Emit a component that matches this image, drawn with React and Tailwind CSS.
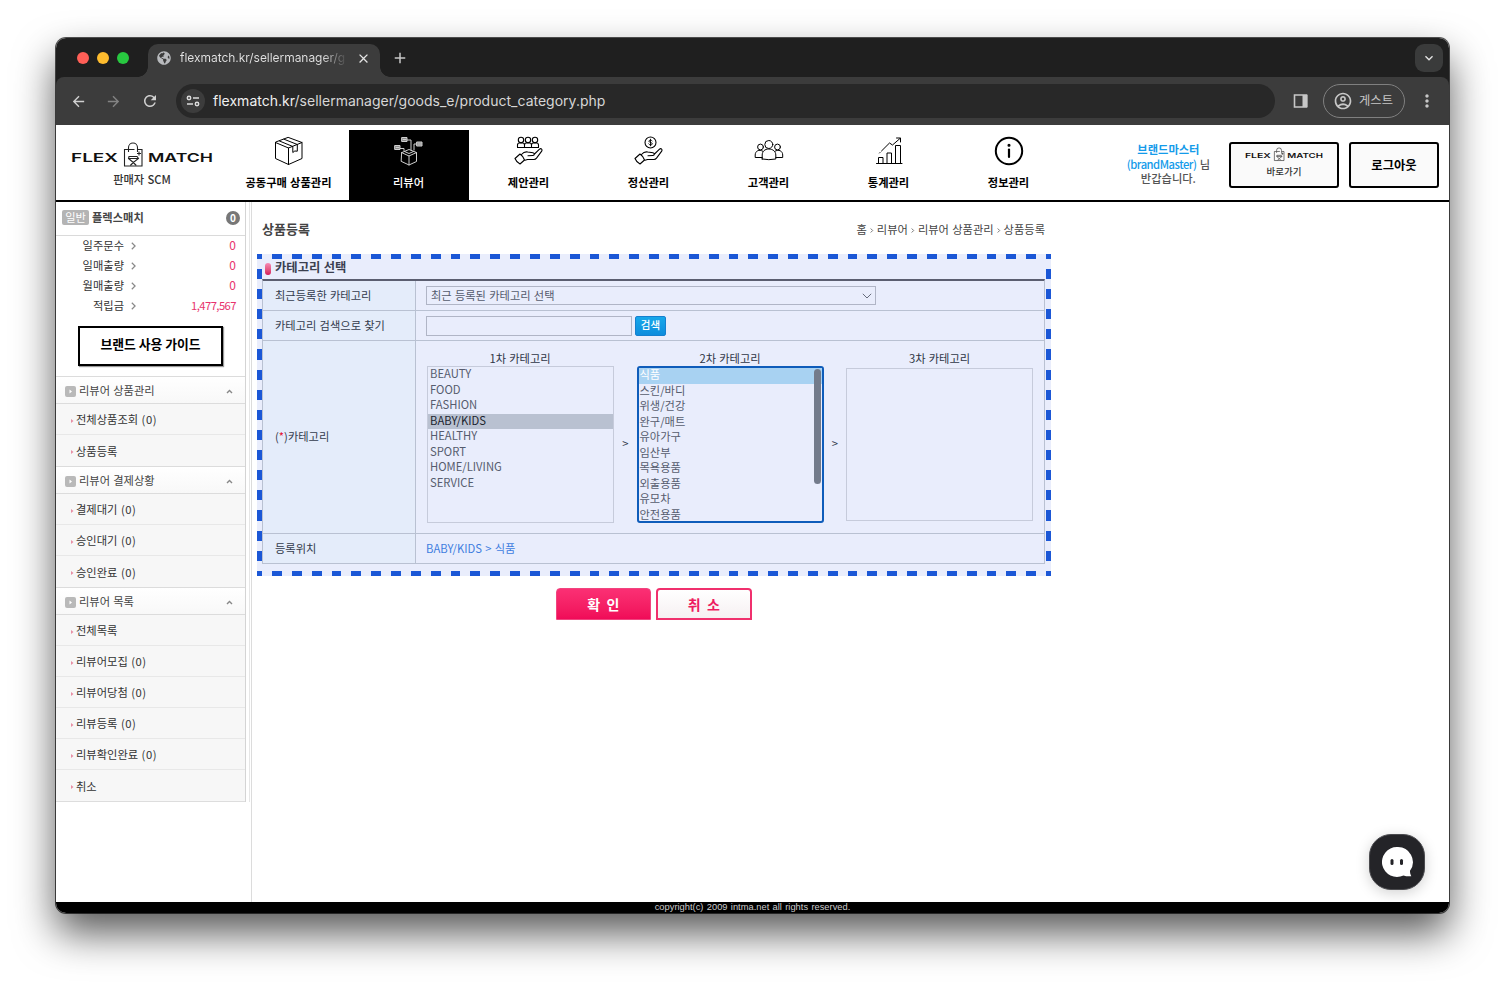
import React, { useState } from "react";
import { FaGlobeAmericas } from "react-icons/fa";
import {
  MdAdd,
  MdArrowBack,
  MdArrowForward,
  MdClose,
  MdKeyboardArrowDown,
  MdMoreVert,
  MdOutlineAccountCircle,
  MdRefresh,
} from "react-icons/md";

const menus = [
  { name: "공동구매 상품관리", icon: "box" },
  { name: "리뷰어", icon: "reviewer", active: true },
  { name: "제안관리", icon: "proposal" },
  { name: "정산관리", icon: "money" },
  { name: "고객관리", icon: "customer" },
  { name: "통계관리", icon: "chart" },
  { name: "정보관리", icon: "info" },
];

const stats = [
  { label: "일주문수", value: "0" },
  { label: "일매출량", value: "0" },
  { label: "월매출량", value: "0" },
  { label: "적립금", value: "1,477,567" },
];

const sections = [
  {
    title: "리뷰어 상품관리",
    items: [{ name: "전체상품조회", count: 0 }, { name: "상품등록" }],
  },
  {
    title: "리뷰어 결제상황",
    items: [
      { name: "결제대기", count: 0 },
      { name: "승인대기", count: 0 },
      { name: "승인완료", count: 0 },
    ],
  },
  {
    title: "리뷰어 목록",
    items: [
      { name: "전체목록" },
      { name: "리뷰어모집", count: 0 },
      { name: "리뷰어당첨", count: 0 },
      { name: "리뷰등록", count: 0 },
      { name: "리뷰확인완료", count: 0 },
      { name: "취소" },
    ],
  },
];

const firstCategories = [
  "BEAUTY",
  "FOOD",
  "FASHION",
  "BABY/KIDS",
  "HEALTHY",
  "SPORT",
  "HOME/LIVING",
  "SERVICE",
];

const secondCategories = [
  "식품",
  "스킨/바디",
  "위생/건강",
  "완구/매트",
  "유아가구",
  "임산부",
  "목욕용품",
  "외출용품",
  "유모차",
  "안전용품",
];

const Hand = () => (
  <>
    <path d="M1 22.5l5-4.500c2.200 1.500 3.800 3.500 4.500 6l-4.500 4c-2.500-1.200-4-3-5-5.500z" />
    <path d="M7.500 18.500c1.800-2.200 4-3 6.300-2.500l5.200.8c1.700.4 1.600 2.600 0 2.700l-5 .3M20 18.500l5.500-5.300c1.600-1.300 3.300.3 2.200 2l-5.200 7c-.7.900-1.500 1.300-2.500 1.300h-6.500l-2.500.8" />
  </>
);

const MenuIcon = ({ type }) => (
  <svg
    width="30"
    height="30"
    viewBox="0 0 30 30"
    fill="none"
    stroke="currentColor"
    strokeWidth="1.1"
    strokeLinejoin="round"
    strokeLinecap="round"
  >
    {type === "box" && (
      <g strokeWidth="1">
        <path d="M14.500 1.500l13.500 5v16l-13.500 6-13-6v-16z" />
        <path d="M1.500 6.500l13 5.500 13.500-5.500M14.500 12v16.500M5.500 5l13.300 5.500v6l2-1.500 2.500.2V8.500L10 3.200" />
      </g>
    )}
    {type === "reviewer" && (
      <g stroke="#cfcfcf" strokeWidth="1">
        <path d="M8 16.500l7-3 7.500 3v9l-7.500 3.500-7.500-3.500zM7.500 16.500l7.500 3.500 7.500-3.500M15 20v9M10.500 15.500l4.500 2 4.500-2" />
        <path d="M13 4h4v10M25 8h-5v6M6 12.500h4v2" />
        <path d="M8 1.500h5v4H8zM1 9.500h5v4H1zM23 6h5v4h-5z" fill="#8a8a8a" />
        <path d="M9 3.500h3M2 11.500h3M24 8h3" />
      </g>
    )}
    {type === "proposal" && (
      <>
        <circle cx="7" cy="4" r="2.700" />
        <circle cx="14" cy="4" r="2.700" />
        <circle cx="21" cy="4" r="2.700" />
        <path d="M3.500 11.500v-2.500q0-2 2-2h3q2 0 2 2v2.500zM10.500 11.500v-2.500q0-2 2-2h3q2 0 2 2v2.500zM17.500 11.500v-2.500q0-2 2-2h3q2 0 2 2v2.500z" />
        <Hand />
      </>
    )}
    {type === "money" && (
      <>
        <circle cx="16.500" cy="6.500" r="5.500" />
        <path d="M18.200 4.800c-.4-.8-3.300-1.100-3.300.4 0 1.600 3.400.9 3.400 2.600 0 1.500-3.100 1.400-3.600.2M16.500 3.200v6.600" strokeWidth=".9" />
        <Hand />
      </>
    )}
    {type === "customer" && (
      <g strokeWidth="1" transform="translate(0 1)">
        <circle cx="14.800" cy="7.500" r="4" />
        <circle cx="6.500" cy="10" r="2.900" />
        <circle cx="23.500" cy="10" r="2.900" />
        <path d="M8.200 22v-4c0-3.500 2.500-6 6.600-6s7 2.500 7 6v4q-7 1.400-13.600 0zM9 14.300c-4-2.500-7.800-.2-7.800 3.700v2.500h7M20.800 14.300c4-2.500 7.900-.2 7.900 3.700v2.500h-6.800" />
      </g>
    )}
    {type === "chart" && (
      <g strokeWidth="1">
        <path d="M2.500 27.500h25.500M4.500 27.500v-6h4.500v6M13 27.500V17h4.500v10.500M21.500 27.500V9.500h5v18" />
        <path d="M5.500 17l.5-.5M7.500 15l8-8 3 2 7.500-6.500M22.500 2h4v4" />
      </g>
    )}
    {type === "info" && (
      <>
        <circle cx="15" cy="15" r="13.200" strokeWidth="2" />
        <path d="M15 13.500v7.500" strokeWidth="2.200" />
        <circle cx="15" cy="9.300" r="1" fill="currentColor" />
      </>
    )}
  </svg>
);

const Logo = ({ width, height }) => (
  <svg width={width} height={height} viewBox="0 0 142 26">
    <g fontFamily="Inter, sans-serif" fontSize="12" fontWeight="600" fill="#111">
      <text x="0" y="19.500" textLength="47" lengthAdjust="spacingAndGlyphs">
        FLEX
      </text>
      <text x="77" y="19.500" textLength="65" lengthAdjust="spacingAndGlyphs">
        MATCH
      </text>
    </g>
    <g fill="none" stroke="#222" strokeWidth="1.100">
      <path d="M57 7.500H53.500v16.500h17.500V7.500H67" />
      <path d="M57.500 10V5.500a4.500 4.500 0 0 1 9 0V10M57.500 7.500h6" />
      <path d="M58 14.500h8l1.500 2-5.200 4-4.800-4zM58 16.500h9M62.300 20.500l-3 3M62.300 20.500l3 3M68 9.500v4M66 11.500h4" />
    </g>
  </svg>
);

const ChromeBar = () => (
  <div className="text-[#e3e3e3] bg-[#1f1f1f] font-['Inter','Noto_Sans_CJK_KR',sans-serif]">
    <div className="h-[39px] flex items-end">
      <div className="flex gap-2 pl-[21px] pb-[13px] w-[92px]">
        <span className="w-3 h-3 rounded-full bg-[#ff5f57]" />
        <span className="w-3 h-3 rounded-full bg-[#febc2e]" />
        <span className="w-3 h-3 rounded-full bg-[#28c840]" />
      </div>
      <div className="relative w-[232px] h-[33px] bg-[#3c3c3c] rounded-t-[10px] flex items-center pl-[9px] pb-[5px]">
        <span className="absolute -left-[10px] bottom-0 w-[10px] h-[10px] bg-[radial-gradient(circle_at_0_0,#1f1f1f_9.5px,#3c3c3c_10px)]" />
        <span className="absolute -right-[10px] bottom-0 w-[10px] h-[10px] bg-[radial-gradient(circle_at_100%_0,#1f1f1f_9.5px,#3c3c3c_10px)]" />
        <FaGlobeAmericas className="text-[14px] text-[#b8babd] shrink-0" />
        <span className="ml-[9px] w-[168px] text-[12px] tracking-[-0.04px] whitespace-nowrap bg-gradient-to-r from-[#e3e3e3] from-85% to-[#3c3c3c] bg-clip-text text-transparent">
          flexmatch.kr/sellermanager/g
        </span>
        <MdClose className="text-[15px] ml-[8px] shrink-0" />
      </div>
      <MdAdd className="text-[18px] ml-[11px] mb-[10px] text-[#c7c7c7]" />
      <div className="ml-auto mr-[6px] mb-[5px] w-7 h-7 rounded-[9px] bg-[#3a3b3b] flex items-center justify-center">
        <MdKeyboardArrowDown className="text-[16px]" />
      </div>
    </div>
    <div className="h-12 bg-[#3c3c3c] flex items-center rounded-t-[8px]">
      <MdArrowBack className="ml-[14px] text-[17px] text-[#d0d0d0]" />
      <MdArrowForward className="ml-[18px] text-[17px] text-[#838383]" />
      <MdRefresh className="ml-[19px] text-[18px] text-[#d0d0d0]" />
      <div className="ml-[17px] w-[1099px] h-[34px] rounded-full bg-[#282828] flex items-center pl-[5px]">
        <span className="w-6 h-6 rounded-full bg-[#3c3c3c] flex items-center justify-center">
          <svg
            width="14"
            height="12"
            viewBox="0 0 14 12"
            fill="none"
            stroke="#dcdcdc"
            strokeWidth="1.5"
          >
            <circle cx="3" cy="3" r="1.700" />
            <path d="M7 3h6M1 9h6" />
            <circle cx="11" cy="9" r="1.700" />
          </svg>
        </span>
        <span className="ml-2 pb-[2px] text-[14px] tracking-[0.01px] text-[#d6d6d6]">
          <span className="text-[#f0f0f0]">flexmatch.kr</span>
          /sellermanager/goods_e/product_category.php
        </span>
      </div>
      <svg className="ml-[18px]" width="16" height="14" viewBox="0 0 16 14">
        <path d="M1.500 1h12v12h-12z" fill="none" stroke="#c7c7c7" strokeWidth="1.600" />
        <path d="M9.500 1h5v12h-5z" fill="#c7c7c7" />
      </svg>
      <div className="ml-[14px] w-[82px] h-[34px] rounded-full border border-[#808080] flex items-center pl-[9px] text-[12.300px] text-[#c7c7c7]">
        <MdOutlineAccountCircle className="text-[20px] mr-[6px]" />
        게스트
      </div>
      <MdMoreVert className="ml-[12px] text-[20px] text-[#c7c7c7]" />
    </div>
  </div>
);

const Header = () => (
  <header className="h-[77px] shrink-0 border-b-2 border-black flex">
    <div className="w-[172px] pt-[17px] flex flex-col items-center">
      <Logo width={142} height={26} />
      <p className="mt-[2px] leading-[18px] font-medium text-[#333]">판매자 SCM</p>
    </div>
    <nav className="flex mt-[5px] ml-[0.5px]">
      {menus.map((menu) => (
        <a
          key={menu.name}
          className={
            menu.active
              ? "w-[120px] flex flex-col items-center pt-[6px] bg-black text-white font-medium"
              : "w-[120px] flex flex-col items-center pt-[6px] text-black font-bold"
          }
        >
          <MenuIcon type={menu.icon} />
          <span className="mt-[8px] leading-4">{menu.name}</span>
        </a>
      ))}
    </nav>
    <div className="ml-auto mr-[19px] mt-[17px] text-center leading-[14.500px] font-medium text-[#555]">
      <p className="font-bold text-[#149bea]">브랜드마스터</p>
      <p>
        <span className="text-[#149bea] tracking-[-0.5px]">(brandMaster)</span> 님
      </p>
      <p>반갑습니다.</p>
    </div>
    <button className="mt-[17px] w-[110px] h-[46px] rounded-[3px] border-2 border-black bg-[#fafafa] flex flex-col items-center pt-[3px]">
      <Logo width={78} height={15} />
      <span className="mt-[1px] text-[9.500px] leading-4 font-medium text-[#333]">바로가기</span>
    </button>
    <button className="mt-[17px] ml-[10px] mr-[10px] w-[90px] h-[46px] rounded-[3px] border-2 border-black bg-[#fafafa] text-[12.300px] font-bold text-black">
      로그아웃
    </button>
  </header>
);

const Sidebar = () => (
  <aside className="w-[196px] shrink-0 border-r border-[#dcdcdc]">
    <div className="w-[194px] border-r border-[#e6e6e6]">
      <div className="w-[190px] border-r border-[#d4d4d4]">
        <div className="h-[34px] border-b border-[#dadada] flex items-center pl-[6px] pr-[5px] pb-[2px]">
          <span className="w-[27px] h-[15px] rounded-[2px] bg-[#b4b4b4] text-white leading-[15px] text-center">
            일반
          </span>
          <span className="ml-[3px] font-bold text-[#444]">플렉스매치</span>
          <span className="ml-auto w-[14px] h-[14px] rounded-full bg-[#777] text-white text-[10px] font-bold leading-[14px] text-center">
            0
          </span>
        </div>
        <div className="-mt-px">
          {stats.map((stat) => (
            <div key={stat.label} className="h-5 flex items-center pr-[9px]">
              <span className="w-[68px] text-right text-[#333]">{stat.label}</span>
              <svg className="ml-[7px] mt-[2px]" width="5" height="8" viewBox="0 0 5 8">
                <path d="M.8.800l3.300 3.200L.8 7.200" fill="none" stroke="#888" strokeWidth="1.200" />
              </svg>
              <span
                className={
                  stat.value.length > 1
                    ? "ml-auto tracking-[-0.55px] text-[#e8336d]"
                    : "ml-auto text-[12px] text-[#e8336d]"
                }
              >
                {stat.value}
              </span>
            </div>
          ))}
        </div>
        <button className="mt-[11px] ml-[22px] w-[145px] h-[40px] border-2 border-black bg-white text-[12.800px] font-bold text-black shadow-[1px_1px_1px_#999] pb-[4px]">
          브랜드 사용 가이드
        </button>
        <div className="mt-[10px]">
          {sections.map((section) => (
            <div key={section.title}>
              <div className="h-[28px] border-y border-[#dcdcdc] bg-gradient-to-b from-white to-[#f8f8f8] flex items-center pl-[9px] pr-[12px]">
                <svg className="mt-[2px]" width="11" height="11" viewBox="0 0 11 11">
                  <rect width="11" height="11" rx="2" fill="#b9b9b9" />
                  <path d="M4.500 3.500l2.500 2-2.500 2z" fill="#fff" />
                </svg>
                <span className="ml-[3px] text-[#444]">{section.title}</span>
                <svg className="ml-auto mt-[2px]" width="7" height="5" viewBox="0 0 7 5">
                  <path d="M1 4l2.500-2.500L6 4" fill="none" stroke="#888" strokeWidth="1.400" />
                </svg>
              </div>
              <ul>
                {section.items.map((item) => (
                  <li
                    key={item.name}
                    className="h-[31px] pt-px bg-[#f7f7f7] border-b border-[#e8e8e8] last:border-b-0 flex items-center pl-[15px] text-[#333]"
                  >
                    <svg className="mr-[2px] mt-[2px]" width="3" height="4" viewBox="0 0 3 4">
                      <path d="M0 0l2.500 2L0 4z" fill="#e88fa4" />
                    </svg>
                    {item.name}
                    {item.count !== undefined && (
                      <span className="ml-[3.500px] tracking-[0.5px]">({item.count})</span>
                    )}
                  </li>
                ))}
              </ul>
            </div>
          ))}
        </div>
        <div className="border-b border-[#ddd]" />
      </div>
    </div>
  </aside>
);

// blue dashed frame that marks the area being edited
const DashedFrame = () => (
  <>
    <div className="absolute inset-x-0 top-0 h-[5px] bg-[repeating-linear-gradient(90deg,#1b57d6_0_5px,#e9edfc_5px_15px,#1b57d6_15px_19.85px)]" />
    <div className="absolute inset-x-0 bottom-0 h-[5px] bg-[repeating-linear-gradient(90deg,#1b57d6_0_5px,#e9edfc_5px_15px,#1b57d6_15px_19.85px)]" />
    <div className="absolute inset-y-0 left-0 w-[5px] bg-[repeating-linear-gradient(180deg,#1b57d6_0_5px,#e9edfc_5px_15px,#1b57d6_15px_20.125px)]" />
    <div className="absolute inset-y-0 right-0 w-[5px] bg-[repeating-linear-gradient(180deg,#1b57d6_0_5px,#e9edfc_5px_15px,#1b57d6_15px_20.125px)]" />
  </>
);

const Row = ({ label, className, children }) => (
  <div className={`flex border-b border-[#b9c1d2] ${className}`}>
    <div className="w-[153px] shrink-0 bg-[#e4ecfa] border-r border-[#b9c1d2] flex items-center pl-3 text-[#333b4d]">
      {label}
    </div>
    <div className="flex-1 flex items-center pl-[10px]">{children}</div>
  </div>
);

const CategoryForm = () => {
  const [first, setFirst] = useState("BABY/KIDS");
  const [second, setSecond] = useState("식품");

  return (
    <div className="relative ml-[5px] w-[794px] h-[322px] bg-[#e9edfc] pl-[5px] pr-[6px] pt-[5px]">
      <DashedFrame />
      <h2 className="h-[20px] pl-[3px] flex items-center text-[12.300px] leading-4 font-bold text-[#3b4050]">
        <span className="w-[6px] h-[12px] -mt-px mr-[4px] rounded-[3px] bg-gradient-to-b from-[#f58ab4] to-[#d4105a]" />
        <span className="-mt-[5px]">카테고리 선택</span>
      </h2>
      <div className="border-t-2 border-[#5b5e70] border-x border-x-[#b9c1d2]">
        <Row label="최근등록한 카테고리" className="h-[30px]">
          <div className="w-[450px] h-[19px] border border-[#b0b5c6] flex items-center justify-between pl-1 pr-[3px] text-[#555b6d]">
            최근 등록된 카테고리 선택
            <svg width="10" height="6" viewBox="0 0 10 6">
              <path d="M.8.800L5 5l4.200-4.200" fill="none" stroke="#666c7c" />
            </svg>
          </div>
        </Row>
        <Row label="카테고리 검색으로 찾기" className="h-[30px]">
          <input className="w-[206px] h-[20px] border border-[#b0b5c6] outline-none" />
          <button className="ml-[3px] w-[31px] h-[20px] rounded-[2px] border border-[#1580cf] bg-gradient-to-b from-[#18a8ea] to-[#0d8ddd] text-[10.500px] font-medium leading-none text-white">
            검색
          </button>
        </Row>
        <Row
          label={
            <span className="-mt-[2px]">
              (<span className="text-[#e5102d]">*</span>)카테고리
            </span>
          }
          className="h-[193px]"
        >
          <div className="self-start pt-[9px]">
            <p className="text-center leading-4 text-[#2f3646]">1차 카테고리</p>
            <ul className="ml-[1px] w-[187px] h-[157px] border border-[#c6cbdb] leading-[13px] text-[#565c6e]">
              {firstCategories.map((name) => (
                <li
                  key={name}
                  onClick={() => setFirst(name)}
                  className={
                    name === first
                      ? "h-[15.5px] pl-[2px] bg-[#b9c1d1] text-[#20242e]"
                      : "h-[15.5px] pl-[2px]"
                  }
                >
                  {name}
                </li>
              ))}
            </ul>
          </div>
          <span className="w-[22.500px] mt-[13px] text-center text-[#333b4d]">&gt;</span>
          <div className="self-start pt-[9px]">
            <p className="text-center leading-4 text-[#2f3646]">2차 카테고리</p>
            <ul className="relative w-[187px] h-[157px] rounded-[3px] border-2 border-[#0e5cba] leading-[12px] text-[#565c6e]">
              {secondCategories.map((name) => (
                <li
                  key={name}
                  onClick={() => setSecond(name)}
                  className={
                    name === second
                      ? "h-[15.5px] pl-[1px] bg-[#a8d2f2] text-white"
                      : "h-[15.5px] pl-[1px]"
                  }
                >
                  {name}
                </li>
              ))}
              <li className="absolute right-[1px] top-[1px] w-[7px] h-[115px] rounded-full bg-[#737b8b]" />
            </ul>
          </div>
          <span className="w-[22.500px] mt-[13px] text-center text-[#333b4d]">&gt;</span>
          <div className="self-start pt-[9px]">
            <p className="text-center leading-4 text-[#2f3646]">3차 카테고리</p>
            <div className="mt-[2px] w-[187px] h-[153px] border border-[#c6cbdb]" />
          </div>
        </Row>
        <Row label="등록위치" className="h-[30px]">
          <span className="text-[#3f7de0]">
            {first} &gt; {second}
          </span>
        </Row>
      </div>
    </div>
  );
};

const App = () => {
  const path = ["홈", "리뷰어", "리뷰어 상품관리", "상품등록"];

  return (
    <div className="w-[1505px] h-[987px] bg-white overflow-hidden pt-[38px] pl-[56px] font-['Noto_Sans_CJK_KR',sans-serif] text-[11.250px] [word-spacing:0.7px]">
      <div className="relative w-[1393px] h-[875px] flex flex-col rounded-[10px] overflow-hidden bg-white shadow-[0_20px_40px_rgba(0,0,0,0.66),0_0_0_1px_#555]">
        <ChromeBar />
        <Header />
        <div className="flex flex-1 min-h-0">
          <Sidebar />
          <main className="flex-1">
            <div className="h-[52px] w-[793px] pl-[10px] pt-[2px] flex items-center justify-between">
              <h1 className="text-[13px] font-bold text-[#444]">상품등록</h1>
              <p className="text-[#444] flex items-center">
                {path.map((name, i) => (
                  <React.Fragment key={name}>
                    {i > 0 && (
                      <svg className="mx-[3px] mt-[3px]" width="4" height="5" viewBox="0 0 4 5">
                        <path d="M.7.500l2 2-2 2" fill="none" stroke="#777" />
                      </svg>
                    )}
                    {name}
                  </React.Fragment>
                ))}
              </p>
            </div>
            <CategoryForm />
            <div className="mt-3 ml-[303.500px] flex gap-[5px] text-[14px] font-bold leading-none">
              <button className="w-[95.500px] h-[32px] pb-px rounded-t-[4px] border border-[#f0457f] bg-gradient-to-b from-[#fb2f74] to-[#f00a58] text-white">
                확&nbsp; 인
              </button>
              <button className="w-[95.500px] h-[32px] pb-px rounded-t-[4px] border-2 border-[#f0306d] bg-gradient-to-b from-white to-[#f6f0f2] text-[#ee1c60]">
                취&nbsp; 소
              </button>
            </div>
          </main>
        </div>
        <footer className="h-[11px] shrink-0 bg-black text-[#ccc] text-center text-[9.300px] leading-[11px] tracking-[0.02px] font-['Liberation_Sans',sans-serif]">
          copyright(c) 2009 intma.net all rights reserved.
        </footer>
        <button className="absolute right-[24px] bottom-[23px] w-[56px] h-[56px] rounded-[22px] bg-[#242428] border border-[#4a4a4e] shadow-[0_3px_14px_rgba(0,0,0,0.18)] flex items-center justify-center">
          <svg width="32" height="32" viewBox="0 0 32 32">
            <path
              d="M16 1a15 15 0 1 0 6.500 28.500c2.500.8 5 1 7.800.7-1-1.800-1.500-3.500-1.300-5.500A15 15 0 0 0 16 1z"
              fill="#fff"
            />
            <rect x="9.500" y="13" width="3" height="6" rx="1.500" fill="#242428" />
            <rect x="19" y="13" width="3" height="6" rx="1.500" fill="#242428" />
          </svg>
        </button>
      </div>
    </div>
  );
};

export default App;
